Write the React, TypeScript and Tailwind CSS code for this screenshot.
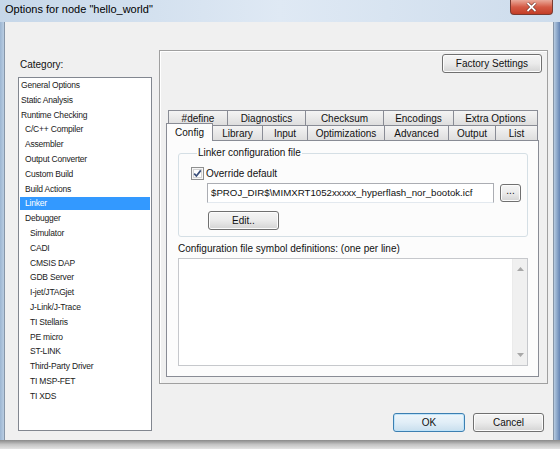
import React from 'react';

type Cat = [string, number];

const categories: Cat[] = [
  ['General Options', 0],
  ['Static Analysis', 0],
  ['Runtime Checking', 0],
  ['C/C++ Compiler', 1],
  ['Assembler', 1],
  ['Output Converter', 1],
  ['Custom Build', 1],
  ['Build Actions', 1],
  ['Linker', 1],
  ['Debugger', 1],
  ['Simulator', 2],
  ['CADI', 2],
  ['CMSIS DAP', 2],
  ['GDB Server', 2],
  ['I-jet/JTAGjet', 2],
  ['J-Link/J-Trace', 2],
  ['TI Stellaris', 2],
  ['PE micro', 2],
  ['ST-LINK', 2],
  ['Third-Party Driver', 2],
  ['TI MSP-FET', 2],
  ['TI XDS', 2],
];

const indent = ['pl-[1px]', 'pl-[5px]', 'pl-[10px]'];

const backTabs = [
  { label: '#define', w: 'w-[59px]' },
  { label: 'Diagnostics', w: 'w-[78px]' },
  { label: 'Checksum', w: 'w-[78px]' },
  { label: 'Encodings', w: 'w-[70px]' },
  { label: 'Extra Options', w: 'w-[85px] border-r' },
];

const frontTabs = [
  { label: 'Library', w: 'w-[49px]' },
  { label: 'Input', w: 'w-[45px] border-l' },
  { label: 'Optimizations', w: 'w-[77px] border-l' },
  { label: 'Advanced', w: 'w-[64px] border-l' },
  { label: 'Output', w: 'w-[47px] border-l' },
  { label: 'List', w: 'w-[43px] border-l border-r' },
];

const tabBase =
  'h-[15px] flex items-center justify-center border-t border-[#898c95] bg-linear-to-b from-[#f4f4f4] to-[#dedede] text-[10px] text-[#111]';

function Button({ className = '', primary = false, children }: { className?: string; primary?: boolean; children: React.ReactNode }) {
  const look = primary
    ? 'border-[#3c7fb1] from-[#eef6fb] via-[#e1eef7] to-[#c9dfee] shadow-[inset_0_0_0_1px_#bfe3f9]'
    : 'border-[#707070] from-[#f5f5f5] via-[#ebebeb] to-[#d4d4d4] shadow-[inset_0_0_0_1px_#fcfcfc]';
  return (
    <div className={`flex items-center justify-center rounded-[3px] border bg-linear-to-b text-[10px] text-[#111] ${look} ${className}`}>
      {children}
    </div>
  );
}

function Checkbox() {
  return (
    <svg width="13" height="13" viewBox="0 0 13 13" className="shrink-0">
      <rect x="0.5" y="0.5" width="12" height="12" fill="#f6f6f6" stroke="#8e8f8f" />
      <rect x="2.5" y="2.5" width="8" height="8" fill="#ffffff" stroke="#d4d4d4" />
      <path d="M3.2 6.6 L5.4 9 L9.8 3.4" fill="none" stroke="#3a4f7a" strokeWidth="1.7" />
    </svg>
  );
}

export default function App() {
  return (
    <div className="w-[560px] h-[449px] overflow-hidden flex flex-col bg-[#e6e6e6] font-['Liberation_Sans',Arial,sans-serif]">
      {/* title bar */}
      <div className="h-[22px] flex items-start justify-between bg-linear-to-r from-[#c6d7e9] via-[#dfe9f4] to-[#cddcec]">
        <span className="pl-[5px] pt-[2px] text-[11px] leading-[14px] text-black">Options for node "hello_world"</span>
        <div className="mr-[7px] w-[43px] h-[15px] rounded-b-[4px] border border-t-0 border-[#7a3a30] bg-linear-to-b from-[#e9a99a] via-[#d45a45] to-[#c33d26] flex items-center justify-center">
          <svg width="11" height="10" viewBox="0 0 11 10">
            <path d="M1.5 1 L9.5 9 M9.5 1 L1.5 9" stroke="#5a2018" strokeWidth="3" />
            <path d="M1.5 1 L9.5 9 M9.5 1 L1.5 9" stroke="#ffffff" strokeWidth="1.8" />
          </svg>
        </div>
      </div>

      <div className="h-[418px] flex">
        <div className="w-[5px] bg-linear-to-r from-[#9db6d2] to-[#b9cde2] border-r border-[#8796a8]" />

        {/* client */}
        <div className="w-[548px] bg-[#f0f0f0] flex pl-[13px]">
          <div className="w-[134px] pt-[37px] flex flex-col">
            <div className="text-[10px] leading-[12px] pl-[2px] text-[#111]">Category:</div>
            <div className="mt-[6px] h-[354px] bg-white border border-[#828790] px-[1px] text-[8.5px] tracking-[-0.2px] text-[#1a1a1a]">
              {categories.map(([name, lvl]) => (
                <div key={name} className="h-[14.8px] flex items-center">
                  <div
                    className={`w-full h-[13px] flex items-center ${indent[lvl]} ${
                      name === 'Linker' ? 'bg-[#3399ff] text-white' : ''
                    }`}
                  >
                    {name}
                  </div>
                </div>
              ))}
            </div>
          </div>

          <div className="ml-[7px] w-[394px] pr-[5px] flex flex-col">
            {/* options panel */}
            <div className="mt-[28px] h-[334px] border border-[#a0a0a0] shadow-[inset_1px_1px_0_#ffffff] flex flex-col">
              <div className="flex justify-end pr-[5px] pt-[3px]">
                <Button className="w-[100px] h-[19px]">Factory Settings</Button>
              </div>

              <div className="mt-[37px] ml-[6px] w-[373px] flex flex-col">
                <div className="flex pl-[2px]">
                  {backTabs.map((t) => (
                    <div key={t.label} className={`${tabBase} border-l ${t.w}`}>
                      {t.label}
                    </div>
                  ))}
                </div>
                <div className="flex h-[15px] items-start">
                  <div className="relative z-10 -mt-[2px] w-[47px] h-[18px] border-l border-t border-r border-[#898c95] bg-[#fcfcfc] flex items-center justify-center text-[10px] text-[#111]">
                    Config
                  </div>
                  {frontTabs.map((t) => (
                    <div key={t.label} className={`${tabBase} ${t.w}`}>
                      {t.label}
                    </div>
                  ))}
                </div>

                {/* tab page */}
                <div className="h-[237px] border border-[#898c95] bg-[#fcfcfc] pl-[11px] pt-[6px] flex flex-col">
                  <fieldset className="w-[350px] h-[90px] border border-[#d5dfe5] rounded-[3px] pl-[12px]">
                    <legend className="ml-[6px] px-[1px] text-[10px] leading-[12px] text-[#111]">Linker configuration file</legend>
                    <div className="mt-[8px] h-[13px] flex items-center gap-[2px]">
                      <Checkbox />
                      <span className="text-[10px] text-[#111]">Override default</span>
                    </div>
                    <div className="mt-[3px] flex items-center">
                      <div className="ml-[16px] w-[287px] h-[20px] bg-white border border-[#abadb3] border-b-[#e3e9ef] flex items-center pl-[3px] text-[9.7px] text-[#111] whitespace-nowrap">
                        $PROJ_DIR$\MIMXRT1052xxxxx_hyperflash_nor_bootok.icf
                      </div>
                      <Button className="ml-[6px] w-[21px] h-[18px] text-[8px] items-end pb-[3px]">...</Button>
                    </div>
                    <Button className="mt-[8px] ml-[17px] w-[71px] h-[19px]">Edit..</Button>
                  </fieldset>

                  <div className="mt-[6px] text-[10px] leading-[12px] text-[#111]">
                    Configuration file symbol definitions: (one per line)
                  </div>
                  <div className="mt-[3px] w-[350px] h-[108px] bg-white border border-[#c6c8cc] flex">
                    <div className="flex-1" />
                    <div className="w-[15px] bg-[#f0f0f0] border-l border-[#ebebeb] flex flex-col items-center justify-between py-[8px]">
                      <svg width="7" height="4" viewBox="0 0 7 4">
                        <path d="M0 4 L3.5 0 L7 4 Z" fill="#a8a8a8" />
                      </svg>
                      <svg width="7" height="4" viewBox="0 0 7 4">
                        <path d="M0 0 L3.5 4 L7 0 Z" fill="#a8a8a8" />
                      </svg>
                    </div>
                  </div>
                </div>
              </div>
            </div>

            <div className="mt-[29px] flex justify-end gap-[8px] pr-[4px]">
              <Button primary className="w-[72px] h-[19px]">OK</Button>
              <Button className="w-[71px] h-[19px]">Cancel</Button>
            </div>
          </div>
        </div>

        <div className="w-[7px] bg-linear-to-r from-[#b7cbe0] via-[#8ea9cb] to-[#6685b3] border-l border-[#8796a8]" />
      </div>

      <div className="h-[9px] bg-linear-to-b from-[#8a8a8a] via-[#c4c4c4] to-[#e4e4e4]" />
    </div>
  );
}
